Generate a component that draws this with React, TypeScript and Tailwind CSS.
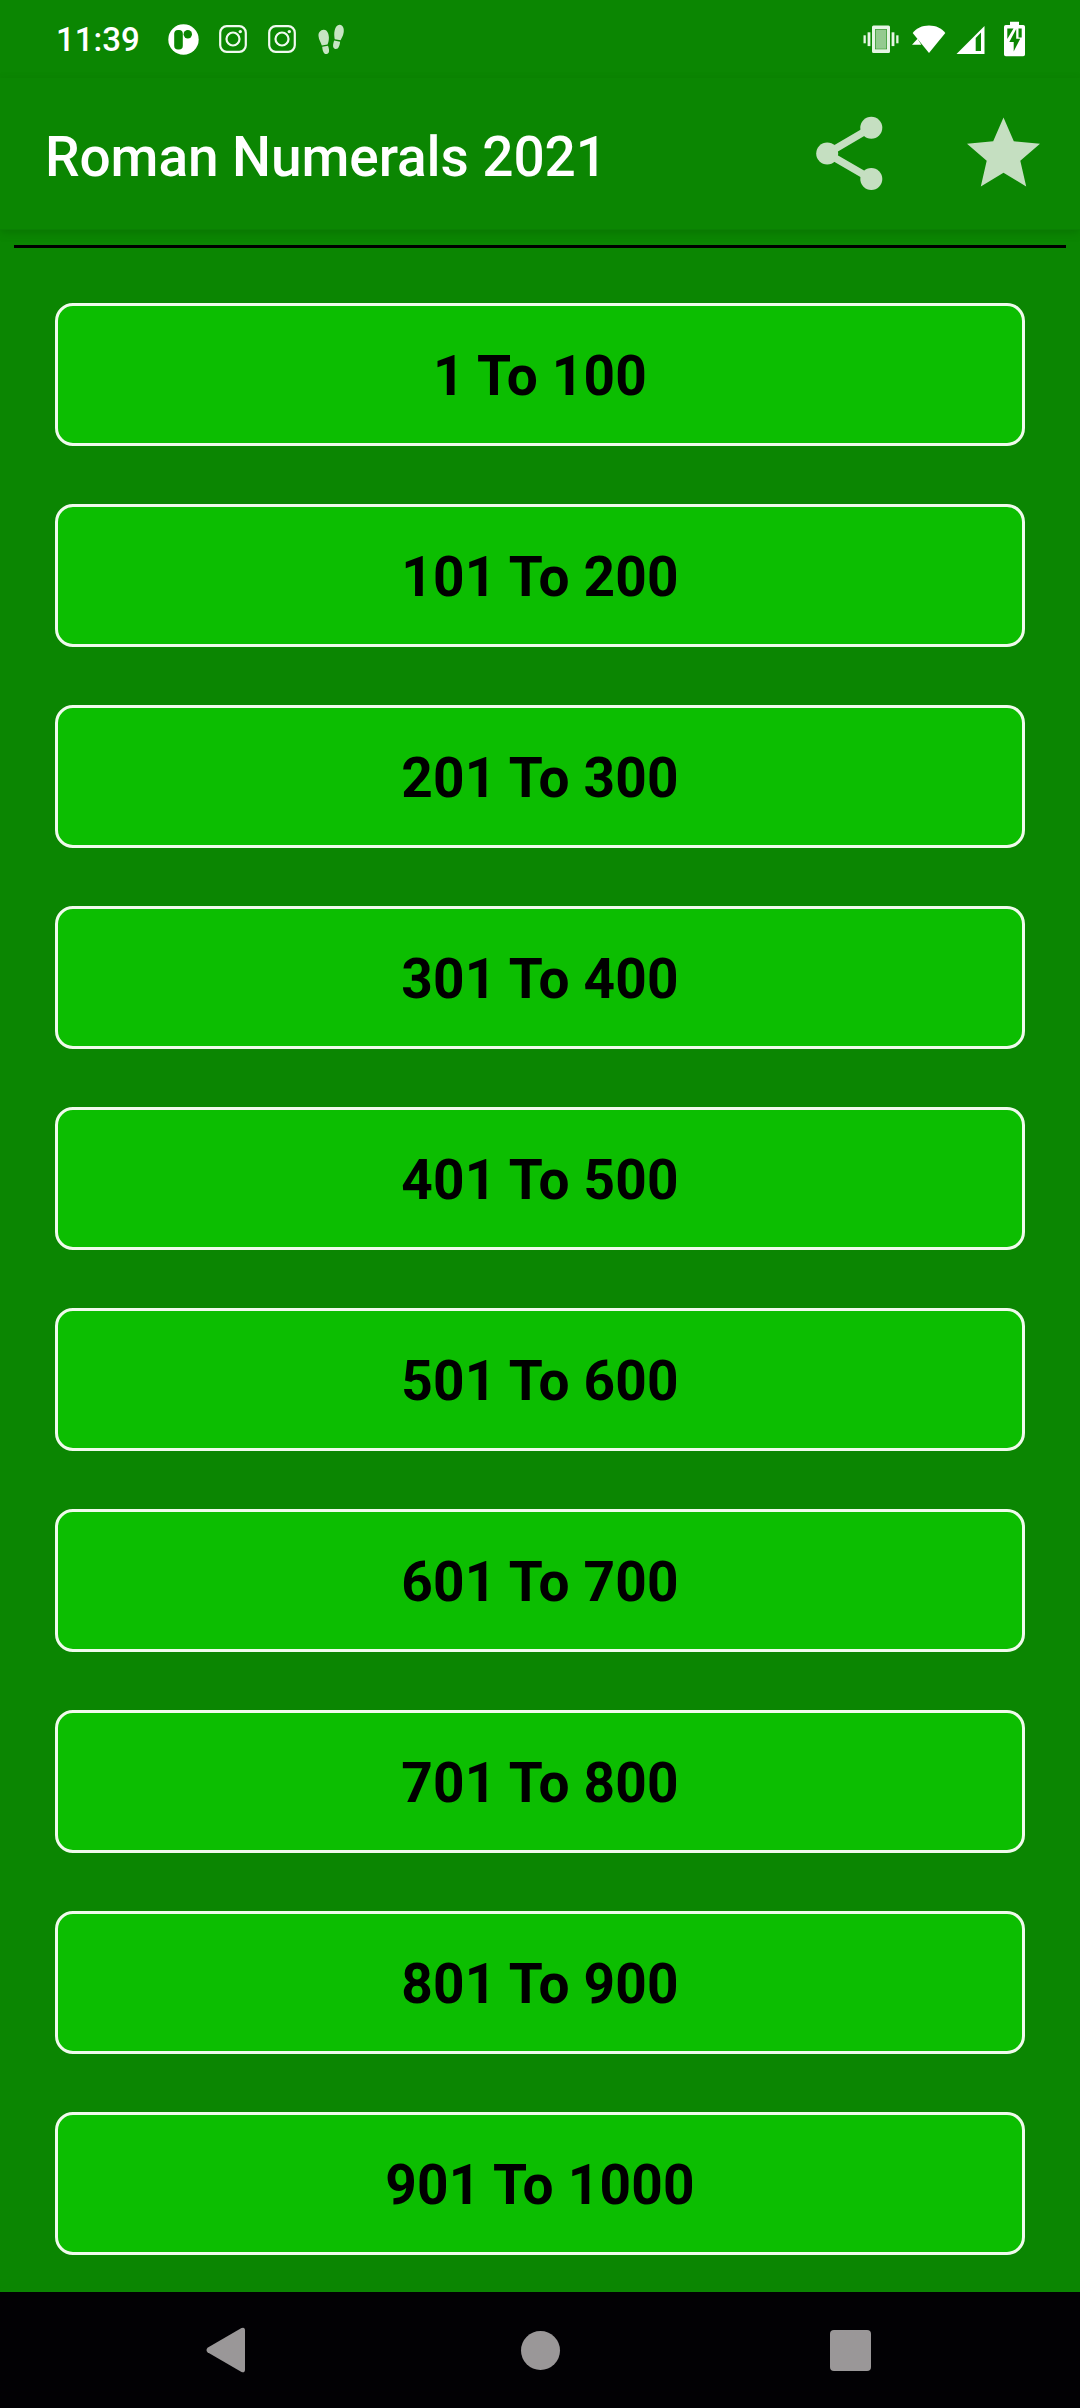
import React from 'react';

const ranges = [
  '1 To 100',
  '101 To 200',
  '201 To 300',
  '301 To 400',
  '401 To 500',
  '501 To 600',
  '601 To 700',
  '701 To 800',
  '801 To 900',
  '901 To 1000',
];

const InstagramIcon: React.FC = () => (
  <svg width="28" height="28" viewBox="0 0 28 28" fill="none" stroke="#f1faf0" strokeWidth="2.2">
    <rect x="1.2" y="1.2" width="25.6" height="25.6" rx="6.5" />
    <circle cx="14" cy="14" r="6.5" />
    <circle cx="21.3" cy="6.6" r="1.7" fill="#f1faf0" stroke="none" />
  </svg>
);

const StatusBar: React.FC = () => (
  <div className="flex h-[78px] items-center justify-between pl-[56px] pr-[55px]">
    <div className="flex items-center">
      <span className="w-[112px] pt-px text-[33px] leading-none font-medium text-white">11:39</span>
      {/* Notifications */}
      <svg width="31" height="31" viewBox="0 0 31 31">
        <circle cx="15.5" cy="15.5" r="15.2" fill="#fff" />
        <rect x="6.2" y="6" width="8.6" height="19.5" rx="3.8" fill="#0b8602" />
        <circle cx="19.8" cy="10.2" r="4.2" fill="#0b8602" />
      </svg>
      <div className="ml-[20px] flex items-center gap-[21px]">
        <InstagramIcon />
        <InstagramIcon />
      </div>
      <svg className="ml-[22px]" width="27" height="31" viewBox="0 0 27 31" fill="#c7e5c4">
        <path d="M5.5 5.7C8.6 5.3 10.7 8.6 10.9 13.2 11 16.2 10.4 18.4 9.5 20.6L3.8 21.4C2.9 18.5.8 16 .5 12 .2 8.4 2.5 6 5.5 5.7Z" />
        <path d="M4.2 22.8 10 21.8C11.2 25 12 29.3 8.9 30 5.6 30.7 4.6 26.9 4.2 22.8Z" />
        <path d="M21.8.7C24.9 1 26.3 4.3 25.7 8.3 25.2 11.9 23.6 14.1 22.6 16.3L16.7 15.3C16.3 12.2 15.9 9.6 16.7 6.3 17.5 2.8 19.4.5 21.8.7Z" />
        <path d="M16.2 16.6 22.1 17.7C21.6 21.7 20.4 25.5 17.3 24.9 14 24.2 15 20 16.2 16.6Z" />
      </svg>
    </div>

    <div className="flex items-center">
      {/* Vibrate */}
      <svg width="36" height="36" viewBox="0 0 36 36" fill="#e6f5e4">
        <path fillRule="evenodd" d="M10.5 4.5h15a1.5 1.5 0 0 1 1.5 1.5v24.500a1.5 1.5 0 0 1-1.5 1.5h-15a1.5 1.5 0 0 1-1.5-1.5V6a1.5 1.5 0 0 1 1.500-1.5ZM12 8.300v20h12v-20Z" />
        <rect x="12.5" y="8.8" width="11" height="19" fill="#94ca90" />
        <rect x="4.6" y="11.3" width="2.8" height="13.8" />
        <rect x="28.6" y="11.3" width="2.8" height="13.8" />
        <rect x="0.5" y="14.3" width="2.3" height="8" />
        <rect x="33.2" y="14.3" width="2.3" height="8" />
      </svg>
      {/* Wifi */}
      <svg className="ml-[13px]" width="34" height="36" viewBox="0 0 34 36" fill="#fff">
        <path d="M17 32 .7 12C4.5 7.200 10 4.500 17 4.500S29.500 7.200 33.300 12Z" />
        <path d="M0 23.800 5.500 17.800 9.300 23.800Z" />
      </svg>
      {/* Signal */}
      <svg className="ml-[10px]" width="29" height="36" viewBox="0 0 29 36">
        <path d="M.5 33 28.500 5V33Z" fill="#fff" />
        <path d="M19.700 17 25 11.600V30h-5.300Z" fill="#0b8602" />
      </svg>
      {/* Battery */}
      <svg className="ml-[19px]" width="21" height="36" viewBox="0 0 21 36">
        <path d="M6 .8h9V4h4.200A1.800 1.800 0 0 1 21 5.800v27.700a1.800 1.800 0 0 1-1.800 1.800H1.800A1.800 1.800 0 0 1 0 33.500V5.800A1.800 1.800 0 0 1 1.800 4H6Z" fill="#fff" />
        <path d="M3.300 7.500H9.500L3.300 18ZM14.500 7.500h3.200v9h-3.200ZM12.200 8v9.700h4L9.700 30.500V21H5.300Z" fill="#0b8602" />
      </svg>
    </div>
  </div>
);

const Toolbar: React.FC = () => (
  <div className="flex h-[152px] items-center justify-between border-b border-[#0a8003] pl-[45px] pr-[40px] shadow-[0_3px_8px_rgba(0,70,0,0.25)]">
    <h1 className="pt-[7px] text-[55px] leading-none font-medium tracking-[-0.1px] whitespace-nowrap text-white">
      Roman Numerals 2021
    </h1>
    <div className="flex items-center gap-[84px]">
      <button title="Share">
        <svg width="67" height="75" viewBox="0 0 67 75" fill="#c5dfc1">
          <path d="M55.300 11.700 11.200 37.500 55.300 63" fill="none" stroke="#c5dfc1" strokeWidth="7.3" />
          <circle cx="11.2" cy="37.5" r="11" />
          <circle cx="55.3" cy="11.7" r="11" />
          <circle cx="55.3" cy="63" r="11" />
        </svg>
      </button>
      <button title="Rate">
        <svg width="73" height="75" viewBox="0 0 73 75" fill="#c5dfc1">
          <path d="M36.500 1.500 46.800 25.300 73 27.700 53.300 44.800 59.200 70.500 36.500 56.700 13.800 70.500 19.700 44.800 0 27.700 26.200 25.300Z" />
        </svg>
      </button>
    </div>
  </div>
);

const NavigationBar: React.FC = () => (
  <div className="flex h-[116px] items-center bg-[#020104] pl-[206px]">
    <svg width="40" height="46" viewBox="0 0 40 46" fill="#9a9798">
      <path d="M1.500 20.700 35.500 1Q39 -.3 39 3.500V42.500Q39 46.300 35.500 45L1.500 25.300Q-.5 23 1.500 20.700Z" />
    </svg>
    <div className="ml-[275px] h-[39px] w-[39px] rounded-full bg-[#9a9798]" />
    <div className="ml-[270px] h-[41px] w-[41px] rounded-[4px] bg-[#9a9798]" />
  </div>
);

const App: React.FC = () => {
  return (
    <div className="flex h-[2408px] w-[1080px] flex-col bg-[#0b8602] font-['Roboto',sans-serif]">
      <StatusBar />
      <Toolbar />
      <div className="flex-1 px-[14px] pt-[15px]">
        <div className="h-[3px] bg-black" />
        <div className="flex flex-col gap-[58px] px-[41px] pt-[55px]">
          {ranges.map((range) => (
            <button
              key={range}
              className="h-[143px] rounded-[18px] border-3 border-[#f0fbec] bg-[#0cbe01] pt-[4px] text-[55px] leading-none font-bold tracking-[0.2px] text-black"
            >
              {range}
            </button>
          ))}
        </div>
      </div>
      <NavigationBar />
    </div>
  );
};

export default App;
